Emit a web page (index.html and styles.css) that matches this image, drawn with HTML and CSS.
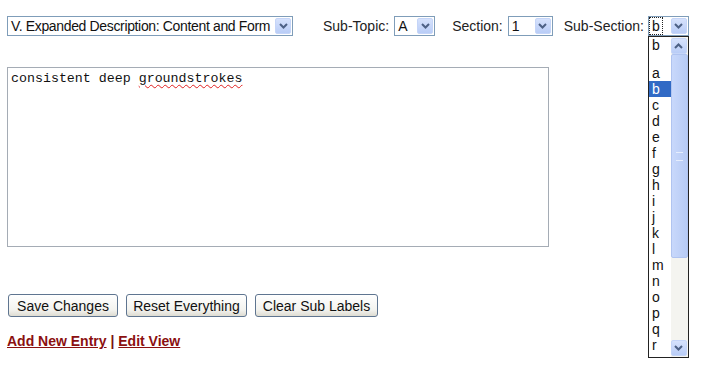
FILE: index.html
```html
<!DOCTYPE html>
<html>
<head>
<meta charset="utf-8">
<link rel="stylesheet" href="styles.css">
</head>
<body>
<div class="page">
  <div class="toprow">
    <div class="sel sel-main"><span class="val">V. Expanded Description: Content and Form</span><span class="arrow"><svg width="9" height="6" viewBox="0 0 9 6"><path d="M1 1 L4.5 4.5 L8 1" fill="none" stroke="#4d6185" stroke-width="2"/></svg></span></div>
    <span class="lbl lbl-topic">Sub-Topic:</span>
    <div class="sel sel-a"><span class="val">A</span><span class="arrow"><svg width="9" height="6" viewBox="0 0 9 6"><path d="M1 1 L4.5 4.5 L8 1" fill="none" stroke="#4d6185" stroke-width="2"/></svg></span></div>
    <span class="lbl lbl-section">Section:</span>
    <div class="sel sel-1"><span class="val">1</span><span class="arrow"><svg width="9" height="6" viewBox="0 0 9 6"><path d="M1 1 L4.5 4.5 L8 1" fill="none" stroke="#4d6185" stroke-width="2"/></svg></span></div>
    <span class="lbl lbl-sub">Sub-Section:</span>
    <div class="sel sel-b"><span class="val focus">b</span><span class="arrow"><svg width="9" height="6" viewBox="0 0 9 6"><path d="M1 1 L4.5 4.5 L8 1" fill="none" stroke="#4d6185" stroke-width="2"/></svg></span>
      <div class="dropdown">
        <ul class="opts">
          <li>b</li>
          <li class="empty"></li>
          <li>a</li>
          <li class="hl">b</li>
          <li>c</li><li>d</li><li>e</li><li>f</li><li>g</li><li>h</li><li>i</li><li>j</li><li>k</li><li>l</li><li>m</li><li>n</li><li>o</li><li>p</li><li>q</li><li>r</li>
        </ul>
        <div class="sbar">
          <span class="sbtn"><svg width="9" height="6" viewBox="0 0 9 6"><path d="M1 5 L4.5 1.5 L8 5" fill="none" stroke="#4d6185" stroke-width="2"/></svg></span>
          <div class="track">
            <div class="thumb"><span class="grip"></span></div>
          </div>
          <span class="sbtn"><svg width="9" height="6" viewBox="0 0 9 6"><path d="M1 1 L4.5 4.5 L8 1" fill="none" stroke="#4d6185" stroke-width="2"/></svg></span>
        </div>
      </div>
    </div>
  </div>
  <div class="textbox">consistent deep <span class="spell">groundstrokes</span></div>
  <div class="buttons">
    <button class="btn btn-save">Save Changes</button>
    <button class="btn btn-reset">Reset Everything</button>
    <button class="btn btn-clear">Clear Sub Labels</button>
  </div>
  <div class="links"><a href="#">Add New Entry</a> | <a href="#">Edit View</a></div>
</div>
</body>
</html>
```
FILE: styles.css
```css
html, body {
  margin: 0;
  padding: 0;
  background: #fff;
}
body {
  font-family: Arial, "Liberation Sans", sans-serif;
  font-size: 14px;
  color: #222;
}
.page {
  box-sizing: border-box;
  min-height: 372px;
  padding: 16px 0 0 7px;
}
.toprow {
  display: flex;
  align-items: center;
  height: 20px;
}
.lbl {
  white-space: nowrap;
}
.sel {
  position: relative;
  box-sizing: border-box;
  height: 20px;
  border: 1px solid #7f9db9;
  display: flex;
  align-items: center;
  justify-content: space-between;
  padding: 0 1px 0 3px;
  background: #fff;
  color: #111;
  flex-shrink: 0;
}
.sel .val {
  line-height: 16px;
  white-space: nowrap;
}
.sel-main .val {
  letter-spacing: -0.35px;
}
.arrow, .sbtn {
  box-sizing: border-box;
  width: 16px;
  height: 16px;
  flex-shrink: 0;
  display: flex;
  align-items: center;
  justify-content: center;
  background: linear-gradient(#d6e2fc, #b9cdf7);
  border: 1px solid #c5d5f8;
  border-radius: 2px;
}
.sel-main { width: 286px; }
.sel-a { width: 41px; }
.sel-1 { width: 45px; }
.sel-b { width: 41px; padding-left: 1px; }
.lbl-topic { margin-left: 30px; margin-right: 5px; }
.lbl-section { margin-left: 17px; margin-right: 5px; }
.lbl-sub { margin-left: 11px; margin-right: 4px; }
.focus {
  outline: 1px dotted #222;
  padding: 0 2px 0 2px;
}
.dropdown {
  position: absolute;
  left: -1px;
  top: 19px;
  width: 41px;
  height: 322px;
  box-sizing: border-box;
  border: 1px solid #222;
  background: #fff;
  display: flex;
  overflow: hidden;
  z-index: 5;
}
.opts {
  list-style: none;
  margin: 0;
  padding: 0;
  flex: 1;
}
.opts li {
  height: 16px;
  line-height: 16px;
  padding-left: 3px;
  color: #111;
}
.opts li.empty {
  height: 12px;
}
.opts li.hl {
  background: #316ac5;
  color: #fff;
}
.sbar {
  width: 17px;
  display: flex;
  flex-direction: column;
  background: #f4f4f0;
  padding: 1px 0;
  box-sizing: border-box;
}
.track {
  flex: 1;
  display: flex;
  flex-direction: column;
}
.thumb {
  height: 204px;
  background: linear-gradient(90deg, #c8d8fb, #b7cbf5);
  border: 1px solid #b0c4f0;
  border-radius: 2px;
  box-sizing: border-box;
  display: flex;
  align-items: center;
  justify-content: center;
}
.grip {
  width: 7px;
  height: 7px;
  border-top: 1px solid #e6eefd;
  border-bottom: 1px solid #e6eefd;
}
.textbox {
  box-sizing: border-box;
  width: 542px;
  height: 180px;
  margin-top: 31px;
  border: 1px solid #a5acb5;
  padding: 3px 3px;
  font-family: "Courier New", "Liberation Mono", monospace;
  font-size: 13.3px;
  line-height: 15px;
  color: #111;
}
.spell {
  text-decoration: underline wavy #e02020;
  text-decoration-thickness: 1px;
  text-underline-offset: 2px;
}
.buttons {
  display: flex;
  gap: 8px;
  margin-top: 47px;
  padding-left: 1px;
}
.btn {
  box-sizing: border-box;
  height: 23px;
  font-family: Arial, "Liberation Sans", sans-serif;
  font-size: 14px;
  color: #111;
  border: 1px solid #5f7590;
  border-radius: 3px;
  background: linear-gradient(#ffffff, #f3f3ef 70%, #dedcd2);
  padding: 0;
}
.btn-save { width: 110px; }
.btn-reset { width: 121px; }
.btn-clear { width: 123px; }
.links {
  margin-top: 16px;
  font-weight: bold;
  color: #7b1212;
}
.links a {
  color: #8b1010;
  text-decoration: underline;
}
```
